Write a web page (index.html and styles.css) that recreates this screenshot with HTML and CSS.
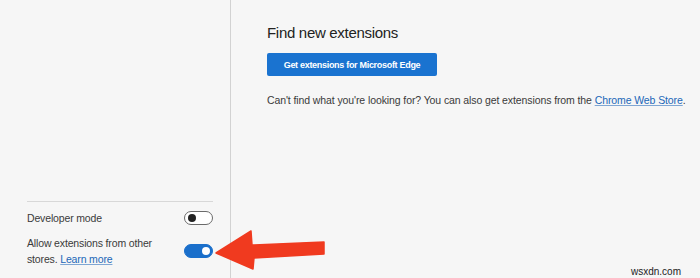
FILE: index.html
```html
<!DOCTYPE html>
<html>
<head>
<meta charset="utf-8">
<link rel="stylesheet" href="styles.css">
</head>
<body>
<div class="app">
  <aside class="sidebar">
    <div class="divider"></div>
    <div class="row">
      <span class="label">Developer mode</span>
      <span class="toggle"><span class="knob"></span></span>
    </div>
    <div class="row row-two">
      <span class="label">Allow extensions from other stores. <a class="link" href="#">Learn more</a></span>
      <span class="toggle on"><span class="knob"></span></span>
    </div>
  </aside>
  <main class="main">
    <h1 class="title">Find new extensions</h1>
    <button class="btn">Get extensions for Microsoft Edge</button>
    <p class="note">Can't find what you're looking for? You can also get extensions from the <a class="link" href="#">Chrome Web Store</a>.</p>
  </main>
</div>
<svg class="arrow" width="700" height="278" viewBox="0 0 700 278">
  <polygon points="216,253 251,231 252,245 324,242 324,254 254,258 253,269" fill="#f03a1f" stroke="#f03a1f" stroke-width="1.5" stroke-linejoin="round"/>
</svg>
<div class="watermark">wsxdn.com</div>
</body>
</html>
```
FILE: styles.css
```css
html, body {
  margin: 0;
  padding: 0;
}
body {
  width: 700px;
  height: 278px;
  overflow: hidden;
  background: #f6f6f6;
  font-family: "Liberation Sans", Arial, sans-serif;
  color: #333;
  position: relative;
}
.app {
  display: flex;
  height: 278px;
}
.sidebar {
  flex: none;
  border-right: 1px solid #d2d2d2;
  box-sizing: border-box;
  width: 231px;
  padding: 0 17px 11px 27px;
  display: flex;
  flex-direction: column;
  justify-content: flex-end;
}
.divider {
  border-top: 1px solid #d8d8d8;
  margin-bottom: 8px;
}
.row {
  display: flex;
  align-items: center;
  justify-content: space-between;
  font-size: 10.5px;
  letter-spacing: -0.15px;
  line-height: 16px;
  color: #3a3a3a;
}
.row-two {
  margin-top: 9px;
}
.row-two .label {
  width: 135px;
}
.toggle {
  width: 27px;
  height: 12px;
  border: 1px solid #6a6a6a;
  border-radius: 8px;
  background: #fff;
  position: relative;
  flex: none;
}
.toggle .knob {
  position: absolute;
  left: 3px;
  top: 2px;
  width: 8px;
  height: 8px;
  border-radius: 50%;
  background: #222;
}
.toggle.on {
  background: #1a6fcb;
  border-color: #1a6fcb;
}
.toggle.on .knob {
  left: auto;
  right: 2px;
  background: #fff;
}
.link {
  color: #2167b8;
  text-decoration: underline;
  text-decoration-color: #7fa6d3;
  text-underline-offset: 1px;
}
.main {
  padding: 24px 0 0 36px;
}
.title {
  margin: 0;
  font-size: 15px;
  letter-spacing: -0.3px;
  font-weight: normal;
  color: #222;
  line-height: 18px;
}
.btn {
  display: block;
  margin-top: 11px;
  width: 170px;
  height: 23px;
  border: none;
  border-radius: 2px;
  background: #1a73d0;
  color: #fff;
  font-family: "Liberation Sans", Arial, sans-serif;
  font-weight: bold;
  font-size: 9px;
  letter-spacing: -0.3px;
  padding: 0;
}
.note {
  margin: 18px 0 0;
  font-size: 10.5px;
  letter-spacing: -0.1px;
  white-space: nowrap;
  color: #3a3a3a;
}
.arrow {
  position: absolute;
  left: 0;
  top: 0;
  pointer-events: none;
}
.watermark {
  position: absolute;
  right: 19px;
  bottom: 1px;
  font-size: 10px;
  color: #222;
  font-family: "Liberation Sans", Arial, sans-serif;
}
```
